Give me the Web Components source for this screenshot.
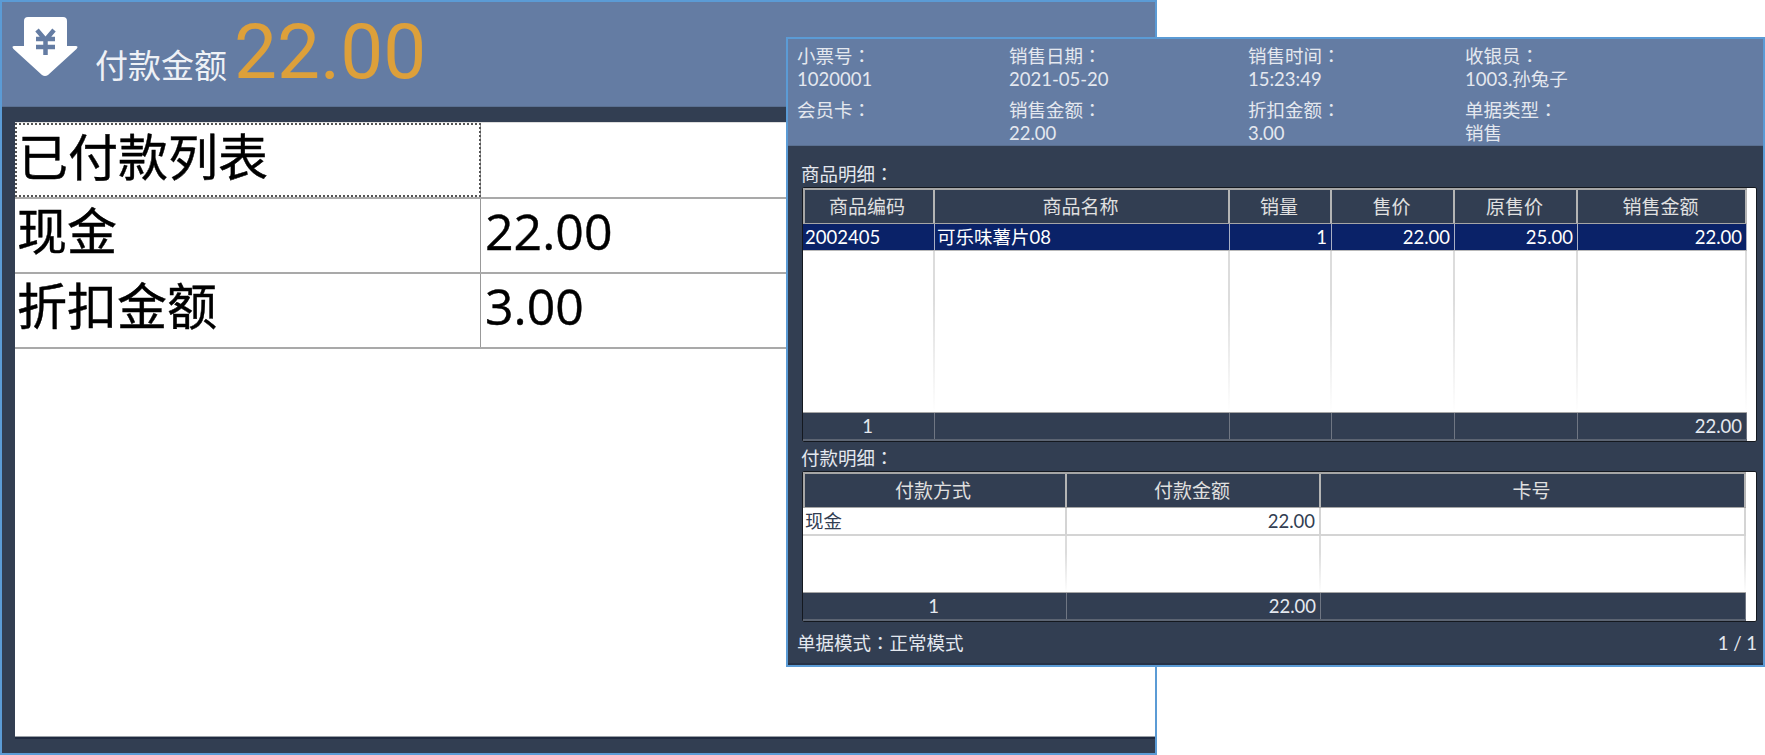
<!DOCTYPE html>
<html>
<head>
<meta charset="utf-8">
<title>付款</title>
<style>
	html, body {
		margin: 0;
		height: 755px;
		overflow: hidden;
		background: #fff;
		font-family: "Open Sans", "Noto Sans CJK SC", sans-serif;
	}
	.colon {
		font-family: Lato, "Noto Sans CJK TC", sans-serif;
	}
</style>
</head>
<body>

<pay-window amount="22.00" label="付款金额">
	<pay-row head><span slot="name">已付款列表</span></pay-row>
	<pay-row><span slot="name">现金</span><span slot="value">22.00</span></pay-row>
	<pay-row><span slot="name">折扣金额</span><span slot="value">3.00</span></pay-row>
</pay-window>

<bill-dialog>
	<bill-field slot="info"><span slot="label">小票号<span class="colon">：</span></span>1020001</bill-field>
	<bill-field slot="info"><span slot="label">销售日期<span class="colon">：</span></span>2021-05-20</bill-field>
	<bill-field slot="info"><span slot="label">销售时间<span class="colon">：</span></span>15:23:49</bill-field>
	<bill-field slot="info"><span slot="label">收银员<span class="colon">：</span></span>1003.孙兔子</bill-field>
	<bill-field slot="info"><span slot="label">会员卡<span class="colon">：</span></span></bill-field>
	<bill-field slot="info"><span slot="label">销售金额<span class="colon">：</span></span>22.00</bill-field>
	<bill-field slot="info"><span slot="label">折扣金额<span class="colon">：</span></span>3.00</bill-field>
	<bill-field slot="info"><span slot="label">单据类型<span class="colon">：</span></span>销售</bill-field>

	<section-label>商品明细<span class="colon">：</span></section-label>
	<data-grid columns="132px 295px 102px 123px 123px 169px" style="height:255px">
		<grid-row kind="head">
			<grid-cell>商品编码</grid-cell><grid-cell>商品名称</grid-cell><grid-cell>销量</grid-cell>
			<grid-cell>售价</grid-cell><grid-cell>原售价</grid-cell><grid-cell>销售金额</grid-cell>
		</grid-row>
		<grid-row kind="selected">
			<grid-cell align="left">2002405</grid-cell><grid-cell align="left">可乐味薯片08</grid-cell><grid-cell align="right">1</grid-cell>
			<grid-cell align="right">22.00</grid-cell><grid-cell align="right">25.00</grid-cell><grid-cell align="right">22.00</grid-cell>
		</grid-row>
		<grid-row kind="fill">
			<grid-cell></grid-cell><grid-cell></grid-cell><grid-cell></grid-cell>
			<grid-cell></grid-cell><grid-cell></grid-cell><grid-cell></grid-cell>
		</grid-row>
		<grid-row kind="foot">
			<grid-cell>1</grid-cell><grid-cell></grid-cell><grid-cell></grid-cell>
			<grid-cell></grid-cell><grid-cell></grid-cell><grid-cell align="right">22.00</grid-cell>
		</grid-row>
	</data-grid>

	<section-label>付款明细<span class="colon">：</span></section-label>
	<data-grid columns="264px 254px 425px" style="height:151px">
		<grid-row kind="head">
			<grid-cell>付款方式</grid-cell><grid-cell>付款金额</grid-cell><grid-cell>卡号</grid-cell>
		</grid-row>
		<grid-row kind="data">
			<grid-cell align="left">现金</grid-cell><grid-cell align="right">22.00</grid-cell><grid-cell></grid-cell>
		</grid-row>
		<grid-row kind="fill">
			<grid-cell></grid-cell><grid-cell></grid-cell><grid-cell></grid-cell>
		</grid-row>
		<grid-row kind="foot">
			<grid-cell>1</grid-cell><grid-cell align="right">22.00</grid-cell><grid-cell></grid-cell>
		</grid-row>
	</data-grid>

	<span slot="mode">单据模式<span class="colon">：</span>正常模式</span>
	<span slot="page">1 / 1</span>
</bill-dialog>

<script>
const PAY_WINDOW = document.createElement('template');
PAY_WINDOW.innerHTML = `
	<style>
		:host {
			display: flex;
			flex-direction: column;
			box-sizing: border-box;
			width: 1157px;
			height: 755px;
			border: 2px solid #5b9bd5;
			background: #323e52;
		}
		header {
			display: flex;
			align-items: flex-start;
			flex: none;
			height: 104px;
			border-bottom: 1px solid #5a7091;
			background: #647ca3;
		}
		svg {
			flex: none;
			width: 66px;
			height: 59px;
			margin: 15px 0 0 10px;
		}
		.label {
			margin: 43px 0 0 17px;
			color: #eef1f6;
			font-size: 33px;
			line-height: 42px;
		}
		.amount {
			margin: 3px 0 0 7px;
			color: #dda03a;
			font-family: Roboto, sans-serif;
			font-size: 76.5px;
			font-weight: 400;
			line-height: 94px;
		}
		main {
			display: flex;
			flex-direction: column;
			flex: 1;
			margin: 15px 0 16px 13px;
			border-bottom: 1px solid #9aa0a6;
			background: #fff;
			box-shadow: 0 2px 0 #1f2a40;
			color: #000;
		}
	</style>
	<header>
		<svg viewBox="0 0 66 59">
			<path d="M16 0H51Q55 0 55 4V29H63.5Q67 29 64.5 32L36 58Q33 60 30 58L1.5 32Q-1 29 2.5 29H12V4Q12 0 16 0Z" fill="#fff"/>
			<path d="M25 13L33.5 23L42 13M24 22H43M24 30H43M33.5 23V38" fill="none" stroke="#647ca3" stroke-width="4.5"/>
		</svg>
		<div class="label"></div>
		<div class="amount"></div>
	</header>
	<main><slot></slot></main>
`;

class PayWindow extends HTMLElement {

	constructor () {
		super();

		this.attachShadow({ mode: 'open' });
		this.shadowRoot.append(PAY_WINDOW.content.cloneNode(true));
		this.shadowRoot.querySelector('.label').textContent = this.getAttribute('label');
		this.shadowRoot.querySelector('.amount').textContent = this.getAttribute('amount');
	};

}

const PAY_ROW = document.createElement('template');
PAY_ROW.innerHTML = `
	<style>
		:host {
			display: grid;
			grid-template-columns: 466px 1fr;
			box-sizing: border-box;
			height: 75px;
			border-bottom: 2px solid #a9a9a9;
			font-size: 50px;
			line-height: 64px;
			-webkit-text-stroke: 0.4px #000;
		}
		.name {
			padding-left: 2px;
			border-right: 1px solid #999;
		}
		.value {
			padding-left: 4px;
		}
		:host([head]) {
			height: 77px;
			border-top: 1px solid #ddd;
			line-height: 68px;
		}
		:host([head]) .name {
			padding-left: 3px;
			outline: 2px dotted #555;
			outline-offset: -2px;
		}
	</style>
	<div class="name"><slot name="name"></slot></div>
	<div class="value"><slot name="value"></slot></div>
`;

class PayRow extends HTMLElement {

	constructor () {
		super();

		this.attachShadow({ mode: 'open' });
		this.shadowRoot.append(PAY_ROW.content.cloneNode(true));
	};

}

const BILL_DIALOG = document.createElement('template');
BILL_DIALOG.innerHTML = `
	<style>
		:host {
			position: absolute;
			left: 786px;
			top: 37px;
			display: flex;
			flex-direction: column;
			box-sizing: border-box;
			width: 979px;
			height: 630px;
			border: 2px solid #5b9bd5;
			background: #323e52;
			color: #e4e8ef;
			font-family: Lato, "Noto Sans CJK SC", sans-serif;
			font-size: 18.5px;
			line-height: 23px;
		}
		.info {
			display: grid;
			grid-template-columns: 212px 239px 217px 1fr;
			row-gap: 7px;
			flex: none;
			box-sizing: border-box;
			height: 107px;
			padding: 6px 0 0 9px;
			border-bottom: 1px solid #5a7091;
			background: #647ca3;
		}
		.body {
			display: flex;
			flex-direction: column;
			flex: none;
			padding: 16px 6px 0 14px;
		}
		.foot {
			display: flex;
			justify-content: space-between;
			flex: 1;
			padding: 6px 6px 0 9px;
			border-bottom: 2px solid #263146;
		}
	</style>
	<div class="info"><slot name="info"></slot></div>
	<div class="body"><slot></slot></div>
	<div class="foot"><slot name="mode"></slot><slot name="page"></slot></div>
`;

class BillDialog extends HTMLElement {

	constructor () {
		super();

		this.attachShadow({ mode: 'open' });
		this.shadowRoot.append(BILL_DIALOG.content.cloneNode(true));
	};

}

const BILL_FIELD = document.createElement('template');
BILL_FIELD.innerHTML = `
	<style>
		:host {
			display: block;
			height: 46px;
		}
		div {
			height: 23px;
		}
	</style>
	<div><slot name="label"></slot></div>
	<div><slot></slot></div>
`;

class BillField extends HTMLElement {

	constructor () {
		super();

		this.attachShadow({ mode: 'open' });
		this.shadowRoot.append(BILL_FIELD.content.cloneNode(true));
	};

}

const SECTION_LABEL = document.createElement('template');
SECTION_LABEL.innerHTML = `
	<style>
		:host {
			display: block;
			height: 25px;
			margin-left: -1px;
			line-height: 24px;
		}
	</style>
	<slot></slot>
`;

class SectionLabel extends HTMLElement {

	constructor () {
		super();

		this.attachShadow({ mode: 'open' });
		this.shadowRoot.append(SECTION_LABEL.content.cloneNode(true));
	};

}

const DATA_GRID = document.createElement('template');
DATA_GRID.innerHTML = `
	<style>
		:host {
			display: flex;
			flex-direction: column;
			box-sizing: border-box;
			margin-bottom: 4px;
			border: 1px solid #14181f;
			border-radius: 2px;
			background: #fff;
		}
	</style>
	<slot></slot>
`;

class DataGrid extends HTMLElement {

	constructor () {
		super();

		this.attachShadow({ mode: 'open' });
		this.shadowRoot.append(DATA_GRID.content.cloneNode(true));
		this.style.setProperty('--cols', this.getAttribute('columns'));
	};

}

const GRID_ROW = document.createElement('template');
GRID_ROW.innerHTML = `
	<style>
		:host {
			display: grid;
			grid-template-columns: var(--cols);
			flex: none;
			align-self: flex-start;
			box-sizing: border-box;
		}
		:host([kind="head"]) {
			height: 36px;
			border-top: 2px solid #a6a6a6;
			border-bottom: 1px solid #a6a6a6;
			background: #323e52;
			box-shadow: inset 2px 0 #a6a6a6;
			color: #e0e0e0;
			font-size: 19px;
			--cell-line: 2px solid #b4b4b4;
			--cell-height: 33px;
		}
		:host([kind="selected"]) {
			height: 27px;
			border-bottom: 1px solid #b9b9b9;
			background: #0a2268;
			color: #fff;
			--cell-line: 1px solid #a9b0c4;
			--cell-height: 26px;
		}
		:host([kind="data"]) {
			height: 28px;
			border-bottom: 2px solid #d4d4d4;
			color: #323e52;
			--cell-line: 2px solid #d4d4d4;
			--cell-height: 26px;
		}
		:host([kind="fill"]) {
			flex: 1;
			--cell-line: 2px solid;
			--cell-image: linear-gradient(#dcdcdc 30%, #fff) 1;
		}
		:host([kind="foot"]) {
			height: 29px;
			border-top: 1px solid #a6a6a6;
			border-bottom: 2px solid #5c6472;
			background: #323e52;
			color: #e4e8ef;
			--cell-line: 1px solid #6f7683;
			--cell-height: 26px;
		}
	</style>
	<slot></slot>
`;

class GridRow extends HTMLElement {

	constructor () {
		super();

		this.attachShadow({ mode: 'open' });
		this.shadowRoot.append(GRID_ROW.content.cloneNode(true));
	};

}

const GRID_CELL = document.createElement('template');
GRID_CELL.innerHTML = `
	<style>
		:host {
			display: block;
			box-sizing: border-box;
			padding: 0 4px 0 2px;
			border-right: var(--cell-line);
			border-image: var(--cell-image, none);
			text-align: center;
			line-height: var(--cell-height);
			white-space: nowrap;
		}
		:host([align="left"]) {
			text-align: left;
		}
		:host([align="right"]) {
			text-align: right;
		}
	</style>
	<slot></slot>
`;

class GridCell extends HTMLElement {

	constructor () {
		super();

		this.attachShadow({ mode: 'open' });
		this.shadowRoot.append(GRID_CELL.content.cloneNode(true));
	};

}

customElements.define('pay-window', PayWindow);
customElements.define('pay-row', PayRow);
customElements.define('bill-dialog', BillDialog);
customElements.define('bill-field', BillField);
customElements.define('section-label', SectionLabel);
customElements.define('data-grid', DataGrid);
customElements.define('grid-row', GridRow);
customElements.define('grid-cell', GridCell);
</script>
</body>
</html>
